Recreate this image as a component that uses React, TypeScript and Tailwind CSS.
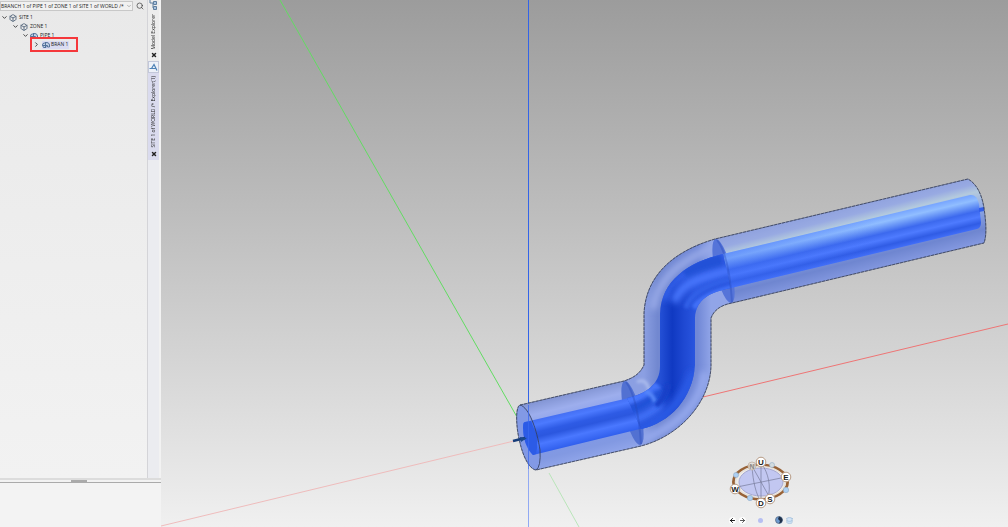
import React from 'react';
import { ArrowLeft, ArrowRight, Box, ChevronDown, ChevronRight, Database, Search, X } from 'lucide-react';

const levels = [
  { label: 'SITE 1', pad: 'pl-0' },
  { label: 'ZONE 1', pad: 'pl-[11px]' },
  { label: 'PIPE 1', pad: 'pl-[21px]' },
  { label: 'BRAN 1', pad: 'pl-8' },
];

const outer =
  'M520 405 L624 381 C633 378 640 374 644 365 L644 313 C646 275 674 251 715 239 L968 179 C977 184 982 195 984 208 C986 222 987 235 984 243 L732 303 C721 305 714 310 711 318 L711 366 C710 402 680 436 641 446 L536 470 C529 469 523 456 520 443 C516 428 515 407 520 405 Z';
const straightLow = 'M525 422 L633 397 L644 428 L533 455 Q523 446 523 426 Q523 422 525 422 Z';
const bends =
  'M627 398 C645 394 660 385 660 366 L660 314 C661 281 688 262 723 254 L731 288 C710 292 696 299 695 318 L695 365 C693 398 670 423 641 429 Z';
const straightHigh = 'M723 254 L970 195 Q977 194 979 204 L981 222 Q981 228 977 229 L731 288 Z';

function TreeIcon({ kind }: { kind: number }) {
  if (kind < 2) return <Box size={8} strokeWidth={3} className="text-[#607184]" />;
  return (
    <svg width="8" height="8" viewBox="0 0 16 16" fill="none" stroke="#54739b" strokeWidth="2">
      <path d="M1 8 Q1 4 5 4 L10 3 Q15 4 15 8 V12 H11 V9 H8 V13 H3 Z" fill="#c4d2e6" />
      <path d="M7 2 V14 M1 9 H7" />
    </svg>
  );
}

function ModelTree() {
  return (
    <ul className="pt-[2px]">
      {levels.map((row, i) => (
        <li key={row.label} className={`${row.pad} relative flex h-[9px] items-center`}>
          <button aria-label={`Toggle ${row.label}`} className="flex w-2 justify-center text-[#333]">
            {i === 3 ? <ChevronRight size={7} strokeWidth={3} /> : <ChevronDown size={7} strokeWidth={3} />}
          </button>
          <span className={i === 3 ? 'ml-[2px] flex items-center gap-px bg-[#dadcf2] pr-px' : 'ml-px flex items-center gap-[2px]'}>
            <TreeIcon kind={i} />
            <span>{row.label}</span>
          </span>
          {i === 3 && <span className="absolute -top-[3px] left-[30px] h-[15px] w-12 border-2 border-[#f5383b]" />}
        </li>
      ))}
    </ul>
  );
}

function TabStrip() {
  return (
    <div className="flex w-3 flex-col border-l border-[#d4d4d8] bg-[#ebecf0]">
      <div className="flex h-[61px] flex-col items-center justify-between bg-[#ececec] pb-[3px]">
        <svg width="9" height="11" viewBox="0 0 9 11" fill="#a9c4e0" stroke="#5f7f9f">
          <path d="M1 0 V3 H4 M4 3 V8" fill="none" />
          <path d="M4.500 1.500 H7.500 V4.500 H4.500 Z M4.500 6.500 H7.500 V9.500 H4.500 Z" />
        </svg>
        <button className="rotate-180 [writing-mode:vertical-rl]">Model Explorer</button>
        <button aria-label="Close Model Explorer"><X size={6} strokeWidth={6} /></button>
      </div>
      <div className="flex h-[99px] flex-col items-center justify-between bg-[#dadbee] pb-[3px]">
        <svg width="11" height="12" viewBox="0 0 11 12" fill="none">
          <rect x=".5" y=".5" width="10" height="11" fill="#edf1f8" stroke="#c3c8da" />
          <path d="M3.500 7.500 L6 3.500 L9 9.500 M1.500 7.500 H8" stroke="#4d82b6" strokeWidth="1.200" />
        </svg>
        <button className="rotate-180 whitespace-nowrap [writing-mode:vertical-rl]">SITE 1 of WORLD /* Explorer(1)</button>
        <button aria-label="Close SITE 1"><X size={6} strokeWidth={6} /></button>
      </div>
    </div>
  );
}

function Scene() {
  return (
    <svg className="absolute inset-0 h-full w-full" viewBox="161 0 847 527" preserveAspectRatio="xMidYMid slice" fill="none">
      <defs>
        <linearGradient id="shellLow" gradientUnits="userSpaceOnUse" x1="572" y1="393" x2="588" y2="458">
          <stop stopColor="#8395d4" />
          <stop offset=".18" stopColor="#9daeed" />
          <stop offset=".5" stopColor="#7f98e8" />
          <stop offset=".85" stopColor="#8299e2" />
          <stop offset="1" stopColor="#8fa4e9" />
        </linearGradient>
        <linearGradient id="shellHigh" gradientUnits="userSpaceOnUse" x1="842" y1="209" x2="858" y2="273">
          <stop stopColor="#91a3df" />
          <stop offset=".12" stopColor="#98aae2" />
          <stop offset=".24" stopColor="#b4cadd" />
          <stop offset=".5" stopColor="#8ea7e5" />
          <stop offset=".82" stopColor="#6f86d0" />
          <stop offset="1" stopColor="#8297df" />
        </linearGradient>
        <linearGradient id="shellMid" gradientUnits="userSpaceOnUse" x1="644" y1="0" x2="711" y2="0">
          <stop stopColor="#8b9fe2" />
          <stop offset=".2" stopColor="#7288d0" />
          <stop offset=".8" stopColor="#7188d6" />
          <stop offset="1" stopColor="#91a5e8" />
        </linearGradient>
        <linearGradient id="coreLow" gradientUnits="userSpaceOnUse" x1="580" y1="409" x2="588" y2="442">
          <stop stopColor="#446ff3" />
          <stop offset=".15" stopColor="#4c7aff" />
          <stop offset=".36" stopColor="#2e5be5" />
          <stop offset=".5" stopColor="#2b57df" />
          <stop offset=".72" stopColor="#4a78ff" />
          <stop offset="1" stopColor="#2f5eec" />
        </linearGradient>
        <linearGradient id="coreHigh" gradientUnits="userSpaceOnUse" x1="850" y1="224" x2="858" y2="258">
          <stop stopColor="#79a7ff" />
          <stop offset=".16" stopColor="#91beff" />
          <stop offset=".48" stopColor="#3c69ee" />
          <stop offset=".65" stopColor="#4e7bff" />
          <stop offset=".83" stopColor="#305ce5" />
          <stop offset="1" stopColor="#4471fb" />
        </linearGradient>
        <linearGradient id="coreFade" gradientUnits="userSpaceOnUse" x1="724" y1="0" x2="880" y2="0">
          <stop stopColor="#3d6df5" stopOpacity=".4" />
          <stop offset="1" stopColor="#3d6df5" stopOpacity="0" />
        </linearGradient>
        <linearGradient id="coreMid" gradientUnits="userSpaceOnUse" x1="660" y1="0" x2="695" y2="0">
          <stop stopColor="#2450d6" />
          <stop offset=".35" stopColor="#1039c2" />
          <stop offset=".7" stopColor="#1f49d3" />
          <stop offset="1" stopColor="#2955df" />
        </linearGradient>
        <clipPath id="outerClip"><path d={outer} /></clipPath>
        <clipPath id="bendClip"><path d={bends} /></clipPath>
        <filter id="soft" x="-50%" y="-50%" width="200%" height="200%"><feGaussianBlur stdDeviation="3" /></filter>
        <filter id="edge" x="-50%" y="-50%" width="200%" height="200%"><feGaussianBlur stdDeviation="1.500" /></filter>
      </defs>

      {/* Axes */}
      <path d="M280 0 L517 417" stroke="#62dc62" />
      <path d="M549 473 L579 527" stroke="#b9e5b9" />
      <path d="M703 397 L1008 324" stroke="#ee7575" />
      <path d="M161 526 L514 441" stroke="#efbcbc" />
      <path d="M528.500 0 V405" stroke="#3364e8" />
      <path d="M528.500 469 V527" stroke="#91a9f3" />

      {/* Insulation */}
      <g clipPath="url(#outerClip)">
        <path d="M500 390 L628 370 L644 450 L520 490 Z" fill="url(#shellLow)" />
        <path d="M624 370 L715 220 L733 305 L722 400 L641 460 Z M640 220 H715 V460 H641 L624 381 L640 365 Z" fill="url(#shellMid)" />
        <path d="M715 225 L1000 160 V250 L732 310 Z" fill="url(#shellHigh)" />
        <path d="M653 309 Q658 269 714 247" stroke="#9aabe8" strokeWidth="7" filter="url(#soft)" />
        <path d="M637 382 Q648 376 650 397" stroke="#aebeee" strokeWidth="3" filter="url(#edge)" />
        <path d="M705 372 Q699 418 642 440" stroke="#94a8ec" strokeWidth="9" filter="url(#soft)" />
      </g>
      <ellipse cx="528.500" cy="437.500" rx="9" ry="33" transform="rotate(-14 528.500 437.500)" fill="#8299e5" />
      <ellipse cx="632.500" cy="413" rx="8" ry="33" transform="rotate(-14 632.500 413)" fill="#5271d2" />
      <ellipse cx="723.500" cy="271" rx="8" ry="33" transform="rotate(-14 723.500 271)" fill="#5574d9" />

      {/* Pipe core */}
      <path d={straightHigh} fill="url(#coreHigh)" />
      <path d={straightHigh} fill="url(#coreFade)" />
      <path d={straightLow} fill="url(#coreLow)" />
      <path d={bends} fill="url(#coreMid)" />
      <g clipPath="url(#bendClip)">
        {/* lower elbow */}
        <path d="M620 403 Q646 398 658 385" stroke="#4c79ff" strokeWidth="8" filter="url(#edge)" />
        <path d="M620 414 Q646 408 660 391" stroke="#2452d9" strokeWidth="9" filter="url(#soft)" />
        <path d="M620 424 Q650 417 661 404" stroke="#4a78ff" strokeWidth="7" filter="url(#soft)" />
        <path d="M630 434 Q676 420 694 372" stroke="#2c5ae6" strokeWidth="10" filter="url(#soft)" />
        <path d="M645 391 Q653 394 655 402" stroke="#5989fa" strokeWidth="4" filter="url(#edge)" />
        <path d="M656 406 Q665 398 668 384" stroke="#153fc8" strokeWidth="5" filter="url(#edge)" />
        {/* upper elbow */}
        <path d="M663 300 Q673 268 740 248" stroke="#3765ee" strokeWidth="7" filter="url(#soft)" />
        <path d="M686 276 Q702 263 722 261" stroke="#2451d7" strokeWidth="13" filter="url(#edge)" />
        <path d="M674 302 Q680 286 697 280 T740 268" stroke="#4c79ff" strokeWidth="8" filter="url(#soft)" />
        <path d="M686 308 Q692 286 740 277" stroke="#3260e8" strokeWidth="5" filter="url(#edge)" />
        <path d="M694 308 Q704 293 740 286" stroke="#4070f8" strokeWidth="6" filter="url(#edge)" />
      </g>
      <path d="M525 422 Q523 422 523 428 Q524 446 533 455 L536 454 Q540 440 531 421 Z" fill="#2c5be6" />
      <path d="M626 382 Q638 398 641 444" stroke="#2649b8" strokeOpacity=".35" strokeWidth="2" />
      <path d="M717 240 Q729 255 732 302" stroke="#2649b8" strokeOpacity=".35" strokeWidth="2" />
      <path d="M979 208 L984 207 V211 L979 212 Z" fill="#315eea" />
      <path d={outer} stroke="#46516f" strokeOpacity=".45" />
      <path d={outer} stroke="#2f3852" strokeOpacity=".7" strokeDasharray="3 1" />
      <path d="M520 405 C529 407 537 430 540 450 Q541 467 536 470" stroke="#35405e" strokeOpacity=".85" />
      <path d="M528.500 405 V469" stroke="#3968ef" strokeOpacity=".75" />
      <path d="M513 441 L525 438" stroke="#163c79" strokeWidth="2.500" />
      <path d="M520 437 L527 438 L521 442 Z" fill="#1c4a8c" />
    </svg>
  );
}

const marks = [
  { t: 'U', x: 36, y: 8 },
  { t: 'E', x: 61, y: 23 },
  { t: 'D', x: 36, y: 49 },
  { t: 'S', x: 45, y: 45 },
  { t: 'W', x: 10, y: 35 },
];

function Compass() {
  return (
    <div className="absolute right-[211px] bottom-0 flex w-[72px] flex-col items-center">
      <svg width="72" height="56" viewBox="0 0 72 56" fill="none">
        <ellipse cx="35.500" cy="28" rx="27" ry="17" fill="#eeece9" stroke="#986237" strokeWidth="3" />
        <ellipse cx="35.500" cy="28" rx="25" ry="15.500" stroke="#e6e0da" strokeWidth="1.500" />
        <ellipse cx="36" cy="28" rx="22" ry="14" fill="#c2c7f1" stroke="#a7a9d0" />
        <path d="M36 9 V48 M12 33 L61 23 M27 12 L45 44 M27 12 C28 28 31 40 36 48 M36 9 C44 19 46 34 43 43" stroke="#777b9b" strokeWidth=".7" />
        <g fill="#add0f3" stroke="#91abc6" strokeWidth=".6">
          <circle cx="11" cy="21" r="2.500" /><circle cx="61" cy="36" r="2.700" />
          <circle cx="25" cy="44" r="2.700" /><circle cx="47" cy="11" r="2.500" fill="#d3dcdf" />
        </g>
        <circle cx="27" cy="12" r="4" fill="#e3e0dc" fillOpacity=".8" stroke="#c6b9ad" />
        <text x="27" y="15" textAnchor="middle" fill="#898985" fontSize="7" fontWeight="700">N</text>
        {marks.map((m) => (
          <g key={m.t}>
            <circle cx={m.x} cy={m.y} r="4.800" fill="#fff" stroke="#b69a84" />
            <text x={m.x} y={m.y + 3} textAnchor="middle" fill="#222" fontSize="8" fontWeight="700">{m.t}</text>
          </g>
        ))}
      </svg>
      <div className="flex h-[17px] w-full items-center justify-between px-1 pt-[3px]">
        <span className="flex gap-[3px]">
          <button aria-label="Previous view" className="rounded-full bg-white text-black"><ArrowLeft size={7} strokeWidth={3} /></button>
          <button aria-label="Next view" className="rounded-full bg-white text-[#444]"><ArrowRight size={7} strokeWidth={3} /></button>
        </span>
        <button aria-label="Center view" className="size-[5px] rounded-full bg-[#b7bff2]" />
        <span className="flex gap-[3px]">
          <button aria-label="Globe">
            <svg width="8" height="8" viewBox="0 0 8 8">
              <circle cx="4" cy="4" r="3.500" fill="#6e9bd0" stroke="#53647b" strokeWidth=".7" />
              <path d="M4 .500 Q7 1 7.500 4 Q7 7 4 7.500 L5 5 L3 3 Z" fill="#1e2f48" />
            </svg>
          </button>
          <button aria-label="Layers" className="text-[#91b3d5]"><Database size={7} fill="#d3e4f5" /></button>
        </span>
      </div>
    </div>
  );
}

export default function App() {
  return (
    <div className="flex min-h-screen font-['Liberation_Sans',sans-serif] text-[5px] leading-[7px] text-[#222]">
      <aside className="flex w-[161px] shrink-0 flex-col bg-[#f2f2f2] font-['Open_Sans',sans-serif]">
        <div className="flex flex-1 pr-[2px]">
          <div className="flex-1 bg-gradient-to-b from-[#e9e9e9] to-[#f2f2f2]">
            <div className="flex h-[11px] items-center">
              <div className="relative flex-1">
                <select aria-label="Current element" className="block h-[10px] w-full appearance-none border border-[#c8c8c8] bg-[#f1f1f1] leading-[8px]">
                  <option>BRANCH 1 of PIPE 1 of ZONE 1 of SITE 1 of WORLD /*</option>
                </select>
                <ChevronDown size={6} className="pointer-events-none absolute top-[2px] right-px text-[#777]" />
              </div>
              <button aria-label="Search" className="flex w-[14px] justify-center text-[#333]"><Search size={8} strokeWidth={2} /></button>
            </div>
            <ModelTree />
          </div>
          <TabStrip />
        </div>
        <div className="flex h-[5px] justify-center border-t-2 border-b border-t-[#dcdcdc] border-b-[#aaa] pr-1">
          <div className="h-[2px] w-4 bg-[#aaa]" />
        </div>
        <div className="h-11 bg-[#f3f3f3]" />
      </aside>
      <main className="relative flex-1 overflow-hidden bg-gradient-to-b from-[#9c9c9c] to-[#f0f0f0]">
        <Scene />
        <Compass />
      </main>
    </div>
  );
}
